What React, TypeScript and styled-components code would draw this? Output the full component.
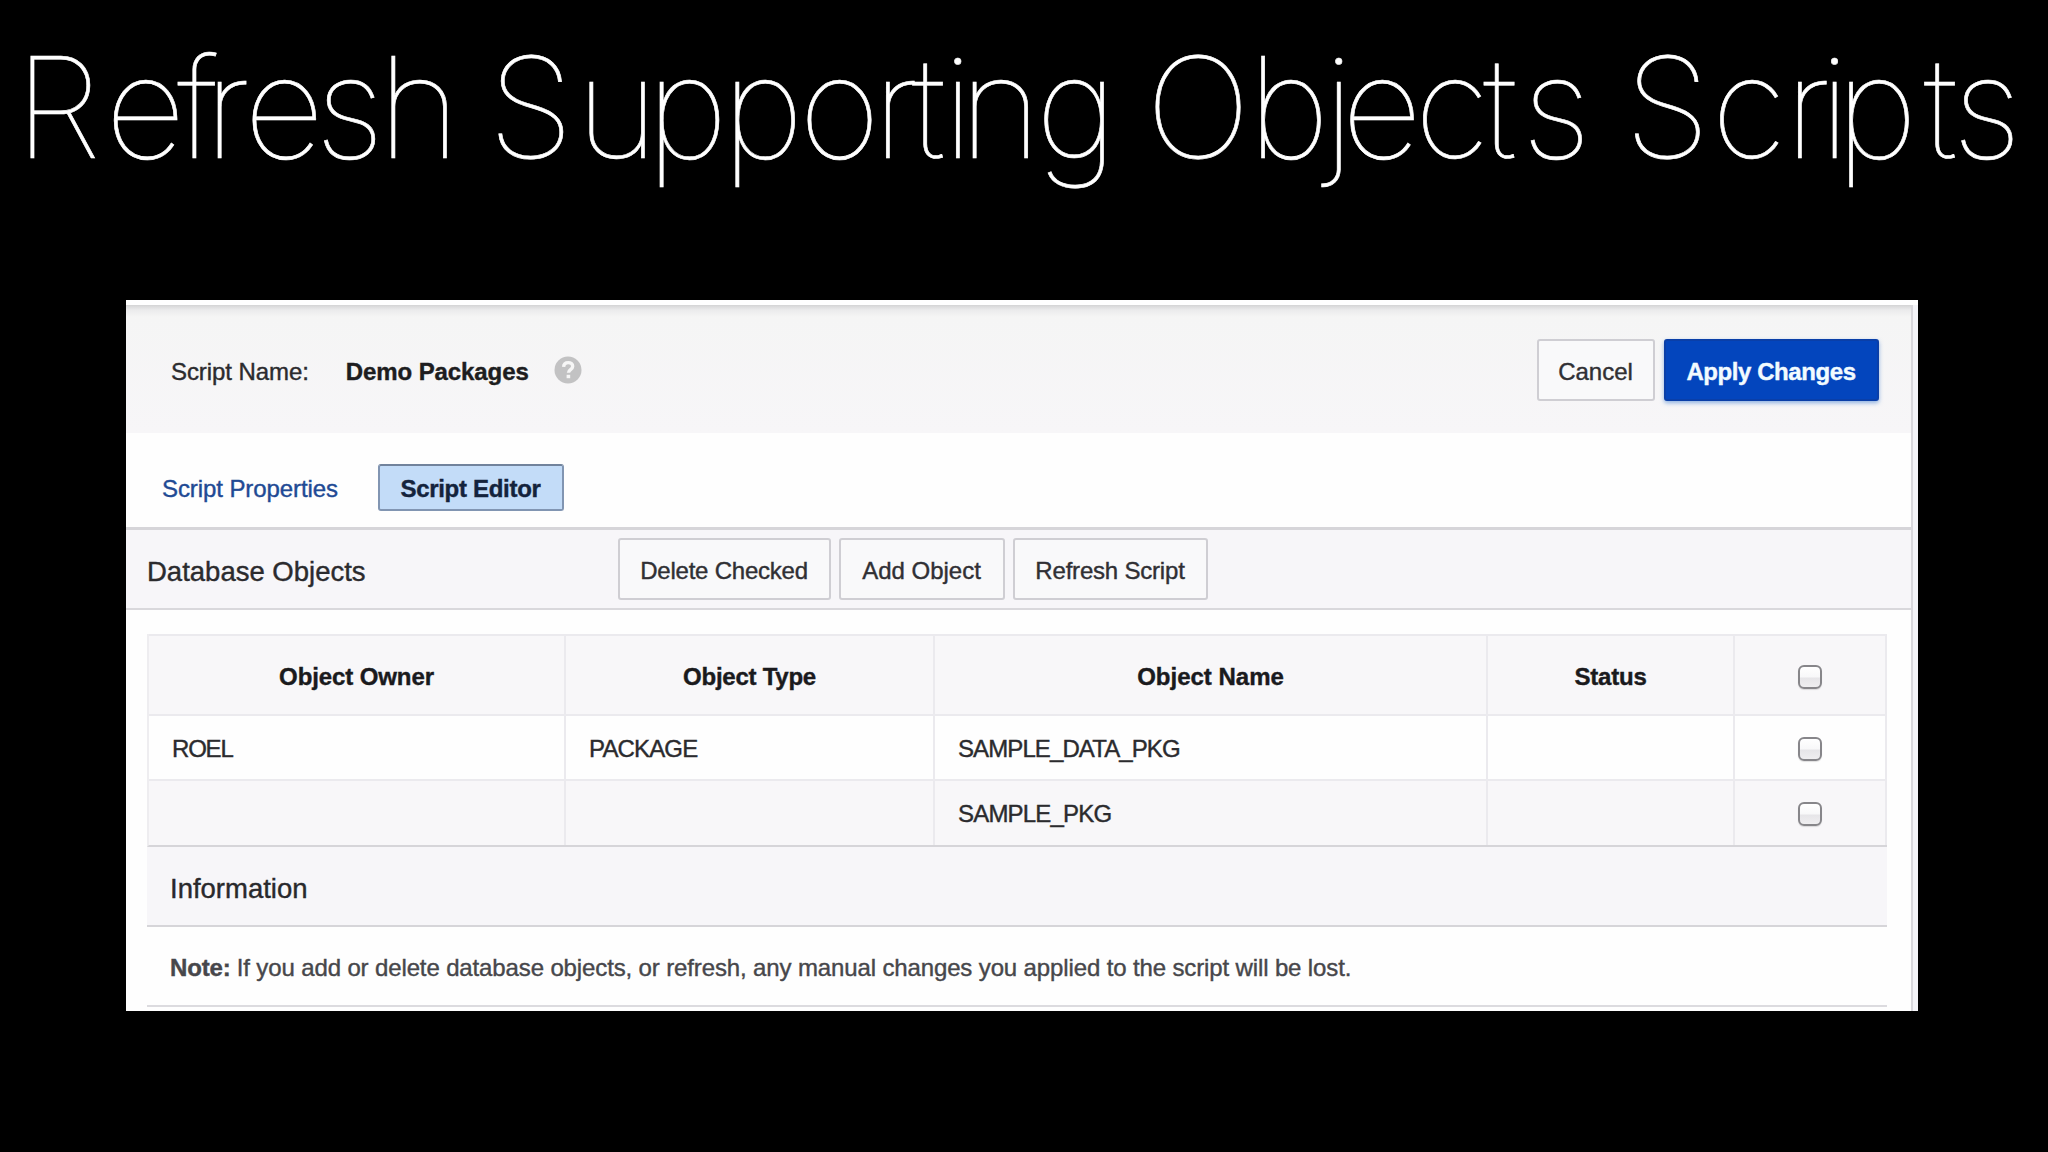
import React from "react";
import styled, { createGlobalStyle } from "styled-components";

const GlobalStyle = createGlobalStyle`
  *, *::before, *::after { box-sizing: border-box; }
  body { margin: 0; background: #000; overflow: hidden; }
`;

const Slide = styled.main`
  width: 2048px;
  height: 1152px;
  background: #000;
  display: flex;
  flex-direction: column;
  font-family: "Liberation Sans", Arial, sans-serif;
`;

const Title = styled.h1`
  margin: 0;
  height: 300px;
  padding: 36.5px 0 0 15px;
  display: flex;
  gap: 35px;
  font: 100 140px/140px Inter, sans-serif;
  color: #fff;
  -webkit-text-stroke: 0.6px #fff;
  white-space: nowrap;
`;

const Word = styled.span``;

const Letter = styled.span<{ $tracking: number }>`
  letter-spacing: ${(p) => p.$tracking}px;
`;

const Panel = styled.section`
  width: 1792px;
  height: 711px;
  margin-left: 126px;
  padding: 5px 5px 0 0;
  background: linear-gradient(#fff 5px, #f4f4f8 5px);
  display: flex;
  font-size: 24px;
  line-height: 28px;
  color: #2b2b2e;
  -webkit-text-stroke: 0.4px currentColor;
`;

const Page = styled.div`
  flex: 1;
  display: flex;
  flex-direction: column;
  border-right: 2px solid #d8d7dc;
  background: #fefefe;
`;

const Text = styled.span<{ $tracking?: number; $bold?: boolean }>`
  letter-spacing: ${(p) => p.$tracking ?? 0}px;
  font-weight: ${(p) => (p.$bold ? 700 : 400)};
  white-space: nowrap;
`;

const Header = styled.header`
  height: 128px;
  padding: 1px 32px 0 45px;
  display: flex;
  align-items: center;
  background: linear-gradient(#d3d3d4 0, #dededf 2px, #ebebec 5px, #f5f5f5 12px, #f7f6f8 100%);
`;

const NameField = styled.div`
  flex: 1;
  display: flex;
  align-items: center;
  padding-top: 4px;
`;

const NameValue = styled.div`
  margin: 0 25px 0 37px;
  color: #1d1d20;
`;

const HelpIcon = styled.svg`
  width: 28px;
  height: 28px;
  margin-top: -3px;
`;

const ButtonRow = styled.div<{ $gap: number }>`
  display: flex;
  gap: ${(p) => p.$gap}px;
`;

const Button = styled.button<{ $width: number; $primary?: boolean }>`
  width: ${(p) => p.$width}px;
  height: 62px;
  padding: 4px 1px 0 0;
  display: flex;
  align-items: center;
  justify-content: center;
  font: inherit;
  -webkit-text-stroke: inherit;
  border-radius: 3px;
  border: 2px solid ${(p) => (p.$primary ? "#0a3fa8" : "#cfced3")};
  background: ${(p) => (p.$primary ? "#0345bd" : "#f9f9fa")};
  color: ${(p) => (p.$primary ? "#f2fbff" : "#303034")};
  box-shadow: ${(p) => (p.$primary ? "0 2px 4px rgba(70, 130, 210, 0.6)" : "none")};
`;

const Tabs = styled.nav`
  height: 94px;
  padding: 14px 0 0 36px;
  display: flex;
  align-items: center;
`;

const TabLink = styled.a`
  width: 216px;
  padding-top: 3px;
  color: #1f4a94;
`;

const ActiveTab = styled.a`
  width: 186px;
  height: 47px;
  padding: 4px 1px 0 0;
  display: flex;
  align-items: center;
  justify-content: center;
  border: 2px solid #8195b2;
  border-top-color: #71839c;
  border-radius: 3px;
  background: #c3dcf8;
  color: #14233c;
`;

const RegionBar = styled.div`
  height: 83px;
  display: flex;
  align-items: center;
  border-top: 3px solid #d6d5d9;
  border-bottom: 2px solid #d9d8dc;
  background: #f7f6f9;
`;

const RegionTitle = styled.h2`
  margin: 0;
  padding: 5px 0 0 21px;
  width: 492px;
  font-size: 27.5px;
  font-weight: 400;
  line-height: 32px;
`;

const Content = styled.div`
  padding: 24px 24px 0 21px;
`;

const Grid = styled.table`
  width: 1740px;
  table-layout: fixed;
  border-collapse: separate;
  border-spacing: 0;
  border-left: 2px solid #eeedf0;
  border-bottom: 2px solid #d6d5d9;
`;

const Row = styled.tr<{ $height: number; $shaded?: boolean }>`
  height: ${(p) => p.$height}px;
  background: ${(p) => (p.$shaded ? "#f8f7f9" : "#fefefe")};
`;

const HeadCell = styled.th`
  padding: 4px 0 0;
  border: solid #ebeaee;
  border-width: 2px 2px 2px 0;
  text-align: center;
  vertical-align: middle;
  color: #1a1a1d;
`;

const Cell = styled.td<{ $center?: boolean; $last?: boolean }>`
  padding: ${(p) => (p.$last ? 1 : 3)}px 0 0 ${(p) => (p.$center ? 0 : 23)}px;
  border: solid #ebeaee;
  border-width: 0 2px ${(p) => (p.$last ? 0 : 2)}px 0;
  text-align: ${(p) => (p.$center ? "center" : "left")};
  vertical-align: middle;
`;

const Check = styled.input`
  appearance: none;
  display: block;
  width: 24px;
  height: 24px;
  margin: 0 auto;
  border: 2px solid #87868a;
  border-radius: 6px;
  background: linear-gradient(#fff 0, #f8f8f9 50%, #e6e5e8 55%, #efeef0 100%);
  box-shadow: 0 1px 1px rgba(0, 0, 0, 0.12);
`;

const InfoTitle = styled.h3`
  margin: 0;
  height: 80px;
  padding: 6px 0 0 23px;
  display: flex;
  align-items: center;
  background: #f7f6f9;
  border-bottom: 2px solid #d6d5d9;
  font-size: 27.5px;
  font-weight: 400;
  color: #29292c;
`;

const Note = styled.p`
  margin: 0;
  height: 80px;
  padding: 4px 0 0 23px;
  display: flex;
  align-items: center;
  gap: 6px;
  border-bottom: 2px solid #dcdbdf;
  color: #47474b;
`;

const titleWords = [
  { text: "Refresh", kerns: [4, -8, -14, -6, -9, -6, -7] },
  { text: "Supporting", kerns: [2.5, -11.5, -5.5, -4.5, -7.5, -6.5, -2.5, -13.5, -5.5, -6.5] },
  { text: "Objects", kerns: [-2.2, -6.2, -12.2, -7.2, -6.2, 4.8, -1.2] },
  { text: "Scripts", kerns: [1.3, -1.7, -10.7, -13.7, 6.3, -3.7, -3.7] },
];

const columns = [
  { label: "Object Owner", width: 417, tracking: -0.1 },
  { label: "Object Type", width: 369, tracking: -0.25 },
  { label: "Object Name", width: 553, tracking: 0 },
  { label: "Status", width: 247, tracking: -0.2 },
];

const rows = [
  { height: 65, cells: [["ROEL", -1.2], ["PACKAGE", -0.85], ["SAMPLE_DATA_PKG", -0.9], ["", 0]] },
  { height: 64, cells: [["", 0], ["", 0], ["SAMPLE_PKG", -0.8], ["", 0]] },
] as { height: number; cells: [string, number][] }[];

export default function App() {
  return (
    <>
      <GlobalStyle />
      <Slide>
        <Title>
          {titleWords.map((word) => (
            <Word key={word.text}>
              {[...word.text].map((ch, i) => (
                <Letter key={i} $tracking={word.kerns[i]}>{ch}</Letter>
              ))}
            </Word>
          ))}
        </Title>
        <Panel>
          <Page>
            <Header>
              <NameField>
                <Text $tracking={-0.08}>Script Name:</Text>
                <NameValue>
                  <Text $bold $tracking={-0.09}>Demo Packages</Text>
                </NameValue>
                <HelpIcon viewBox="0 0 28 28" fill="none" stroke="none">
                  <circle cx="14" cy="14" r="13.5" fill="#c2c2c3" />
                  <path d="M9.6 10.8c.2-2.7 2-4.2 4.6-4.2 2.7 0 4.5 1.5 4.5 3.7 0 3.4-4.2 3.2-4.2 6.4" stroke="#f6f6f6" strokeWidth="3.4" />
                  <rect x="12.6" y="18.8" width="3.6" height="3.4" fill="#f6f6f6" />
                </HelpIcon>
              </NameField>
              <ButtonRow $gap={9}>
                <Button $width={118}>
                  <Text>Cancel</Text>
                </Button>
                <Button $width={215} $primary>
                  <Text $bold $tracking={-0.42}>Apply Changes</Text>
                </Button>
              </ButtonRow>
            </Header>
            <Tabs>
              <TabLink>
                <Text $tracking={-0.09}>Script Properties</Text>
              </TabLink>
              <ActiveTab>
                <Text $bold $tracking={-0.3}>Script Editor</Text>
              </ActiveTab>
            </Tabs>
            <RegionBar>
              <RegionTitle>
                <Text>Database Objects</Text>
              </RegionTitle>
              <ButtonRow $gap={8}>
                <Button $width={213}>
                  <Text $tracking={-0.22}>Delete Checked</Text>
                </Button>
                <Button $width={166}>
                  <Text>Add Object</Text>
                </Button>
                <Button $width={195}>
                  <Text $tracking={-0.2}>Refresh Script</Text>
                </Button>
              </ButtonRow>
            </RegionBar>
            <Content>
              <Grid>
                <colgroup>
                  {columns.map((c) => (
                    <col key={c.label} width={c.width} />
                  ))}
                  <col />
                </colgroup>
                <thead>
                  <Row $height={82} $shaded>
                    {columns.map((c) => (
                      <HeadCell key={c.label}>
                        <Text $bold $tracking={c.tracking}>{c.label}</Text>
                      </HeadCell>
                    ))}
                    <HeadCell>
                      <Check type="checkbox" />
                    </HeadCell>
                  </Row>
                </thead>
                <tbody>
                  {rows.map((row, r) => (
                    <Row key={r} $height={row.height} $shaded={r % 2 === 1}>
                      {row.cells.map(([text, tracking], i) => (
                        <Cell key={i} $last={r === rows.length - 1}>
                          <Text $tracking={tracking}>{text}</Text>
                        </Cell>
                      ))}
                      <Cell $center $last={r === rows.length - 1}>
                        <Check type="checkbox" />
                      </Cell>
                    </Row>
                  ))}
                </tbody>
              </Grid>
              <InfoTitle>
                <Text>Information</Text>
              </InfoTitle>
              <Note>
                <Text $bold $tracking={-0.12}>Note:</Text>
                <Text $tracking={-0.13}>
                  If you add or delete database objects, or refresh, any manual changes you applied to the script will be lost.
                </Text>
              </Note>
            </Content>
          </Page>
        </Panel>
      </Slide>
    </>
  );
}
